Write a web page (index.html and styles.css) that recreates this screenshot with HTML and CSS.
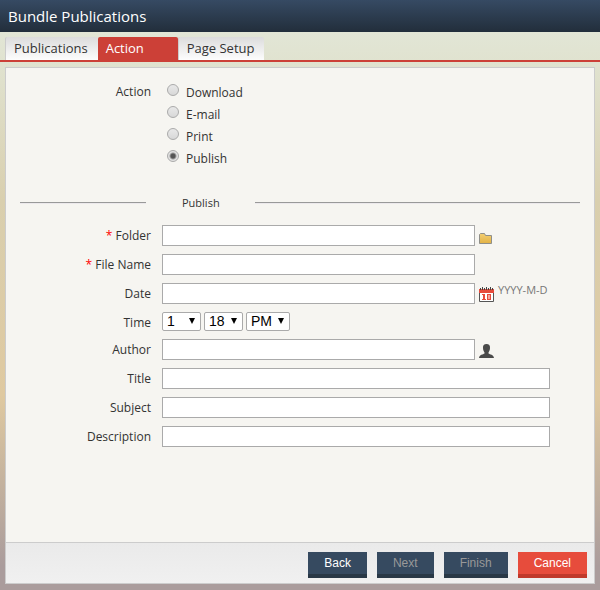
FILE: index.html
```html
<!doctype html>
<html lang="en">
<head>
  <meta charset="UTF-8">
  <meta name="viewport" content="width=device-width, initial-scale=1.0">
  <title>Bundle Publications</title>
  <link rel="stylesheet" href="styles.css">
</head>
<body>
  <header class="header">
    <h1>Bundle Publications</h1>
  </header>

  <nav class="tabs">
    <a href="#publications" class="tab">Publications</a>
    <a href="#action" class="tab active">Action</a>
    <a href="#page-setup" class="tab">Page Setup</a>
  </nav>

  <form class="panel">
    <div class="content">
      <div class="row options" role="radiogroup" aria-labelledby="action-label">
        <span class="label" id="action-label">Action</span>
        <div class="radios">
          <label><input type="radio" name="action" value="download">Download</label>
          <label><input type="radio" name="action" value="email">E-mail</label>
          <label><input type="radio" name="action" value="print">Print</label>
          <label><input type="radio" name="action" value="publish" checked>Publish</label>
        </div>
      </div>

      <h2 class="section">Publish</h2>

      <div class="row">
        <label class="label" for="folder"><span class="required">*</span> Folder</label>
        <input type="text" class="text" id="folder">
        <button type="button" class="icon" aria-label="Browse folders">
          <svg width="13" height="11" viewBox="0 0 13 11">
            <defs>
              <linearGradient id="gold" x1="0" y1="0" x2="0" y2="1">
                <stop offset="0" stop-color="#f3cf74"/>
                <stop offset="1" stop-color="#e3b245"/>
              </linearGradient>
            </defs>
            <path d="M.5 10.500V1.500L1.500.5H5.500L6.500 2.500H12.500V10.500Z" fill="url(#gold)" stroke="#8f8f8a"/>
          </svg>
        </button>
      </div>
      <div class="row">
        <label class="label" for="file-name"><span class="required">*</span> File Name</label>
        <input type="text" class="text" id="file-name">
      </div>
      <div class="row">
        <label class="label" for="date">Date</label>
        <input type="text" class="text" id="date">
        <button type="button" class="icon" aria-label="Pick a date">
          <svg width="15" height="15" viewBox="0 0 15 15">
            <path d="M.5 3V14.500H14.500V3" fill="#fff" stroke="#555"/>
            <path d="M0 2H15V6H0Z" fill="#e74c3c"/>
            <path d="M1 1h1v2h-1zM3 0h1v3h-1zM5 1h1v2h-1zM7 0h1v3h-1zM9 1h1v2h-1zM11 0h1v3h-1zM13 1h1v2h-1z" fill="#444"/>
            <path d="M3 7H6V12H7V13H3V12H4V8H3ZM8 7H12V13H8ZM9.500 8V12H10.500V8Z" fill="#e74c3c" fill-rule="evenodd"/>
          </svg>
        </button>
        <span class="hint">YYYY-M-D</span>
      </div>
      <div class="row time">
        <span class="label">Time</span>
        <span class="select"><select class="hour" aria-label="Hour"><option>1</option></select></span>
        <span class="select"><select class="minute" aria-label="Minute"><option>18</option></select></span>
        <span class="select"><select class="period" aria-label="AM or PM"><option>PM</option></select></span>
      </div>
      <div class="row">
        <label class="label" for="author">Author</label>
        <input type="text" class="text" id="author">
        <button type="button" class="icon" aria-label="Select author">
          <svg width="15" height="14" viewBox="0 0 15 14">
            <path d="M7.500 0C5 0 3.800 1.500 4 4C4 6 5 7.500 5.500 8.500V9.500C4 10.500.5 10.500 0 14H15C14.500 10.500 11 10.500 9.500 9.500V8.500C10 7.500 11 6 11 4C11.200 1.500 10 0 7.500 0Z" fill="#4a4a4a"/>
          </svg>
        </button>
      </div>
      <div class="row">
        <label class="label" for="title">Title</label>
        <input type="text" class="text wide" id="title">
      </div>
      <div class="row">
        <label class="label" for="subject">Subject</label>
        <input type="text" class="text wide" id="subject">
      </div>
      <div class="row">
        <label class="label" for="description">Description</label>
        <input type="text" class="text wide" id="description">
      </div>
    </div>

    <footer class="footer">
      <button type="button" class="btn">Back</button>
      <button type="button" class="btn" disabled>Next</button>
      <button type="button" class="btn" disabled>Finish</button>
      <button type="button" class="btn btn-cancel">Cancel</button>
    </footer>
  </form>
</body>
</html>
```
FILE: styles.css
```css
* {
    box-sizing: border-box;
}

body {
    margin: 0;
    min-height: 100vh;
    display: flex;
    flex-direction: column;
    font-family: "Open Sans", sans-serif;
    font-size: 12px;
    color: #333;
    background: linear-gradient(#e2e6d6 32px, #dfe0cb 14%, #d9cfae 34%, #dfc9a0 67%, #aa9c9c 96%);
}

.header {
    height: 32px;
    padding: 0 8px;
    background: linear-gradient(#364a63, #222e3b);
}

.header h1 {
    margin: 0;
    font-size: 15px;
    font-weight: 400;
    line-height: 32px;
    color: #fff;
}

.tabs {
    display: flex;
    margin-top: 5px;
    padding-left: 5px;
    border-bottom: 2px solid #cc4037;
}

.tab {
    padding: 0 10px 0 8px;
    border-left: 1px solid #ccc;
    border-radius: 2px 2px 0 0;
    font-size: 13px;
    line-height: 23px;
    color: #333;
    text-decoration: none;
    background: linear-gradient(#dcdcdc, #fdfdfd);
}

.tab.active {
    width: 80px;
    border-left: 0;
    font-weight: 500;
    color: #fff;
    background: #cc4037;
}

.panel {
    flex: 1;
    display: flex;
    flex-direction: column;
    margin: 5px 5px 6px;
    border: 1px solid #ccc;
    background: #f6f5f1;
}

.content {
    flex: 1;
    padding: 14px;
}

.row {
    display: flex;
    align-items: flex-start;
    margin-bottom: 8px;
}

.label {
    width: 131px;
    margin-right: 11px;
    font-weight: 500;
    line-height: 21px;
    text-align: right;
}

.options .label {
    line-height: 19px;
}

.required {
    color: #f00;
}

.radios label {
    display: flex;
    height: 22px;
    line-height: 22px;
}

.radios input {
    appearance: none;
    width: 12px;
    height: 12px;
    margin: 2px 7px 0 5px;
    border: 1px solid #aaa;
    border-radius: 50%;
    background: linear-gradient(#e8e8e8, #d8d8d8);
}

.radios input:checked {
    background: radial-gradient(circle, #555 2px, #e2e2e2 4px);
}

.section {
    display: flex;
    align-items: center;
    margin: 23px 0 12px;
    font-size: 11px;
    font-weight: 500;
    line-height: 20px;
}

.section::before,
.section::after {
    content: "";
    border-top: 1px solid #999;
    border-bottom: 1px solid #ece9ec;
}

.section::before {
    width: 126px;
    margin-right: 36px;
}

.section::after {
    flex: 1;
    margin-left: 35px;
}

.text {
    width: 313px;
    height: 21px;
    padding: 0 4px;
    border: 1px solid #aaa;
    font: inherit;
    background: #fff;
}

.text.wide {
    width: 388px;
}

.icon {
    align-self: flex-end;
    margin: 0 0 2px 4px;
    padding: 0;
    border: 0;
    background: none;
    cursor: pointer;
}

.icon svg {
    display: block;
}

.hint {
    margin-left: 4px;
    font-size: 11px;
    line-height: 14px;
    color: #777;
}

.time {
    height: 19px;
}

.select {
    position: relative;
    display: flex;
    margin-right: 3px;
}

.select::after {
    content: "";
    position: absolute;
    top: 6px;
    right: 6px;
    border: solid transparent;
    border-width: 6px 3px 0;
    border-top-color: #000;
    pointer-events: none;
}

.select select {
    appearance: none;
    height: 19px;
    padding: 0 4px;
    border: 1px solid #aaa;
    border-radius: 2px;
    font: 14px "Liberation Sans", sans-serif;
    line-height: 17px;
    color: #000;
    background: #fff;
}

.select .hour,
.select .minute {
    width: 39px;
}

.select .period {
    width: 44px;
}

.footer {
    display: flex;
    justify-content: flex-end;
    gap: 10px;
    height: 41px;
    padding: 9px 7px 0;
    border-top: 1px solid #ccc;
    background: linear-gradient(#eaeaea, #f0f0f0);
}

.btn {
    height: 26px;
    padding: 0 16px;
    border: 0;
    border-bottom: 4px solid #293846;
    font: 12px "Liberation Sans", sans-serif;
    color: #fff;
    background: #364a60;
}

.btn:disabled {
    color: #999;
}

.btn-cancel {
    border-color: #c0392b;
    background: #e74c3c;
}
```
